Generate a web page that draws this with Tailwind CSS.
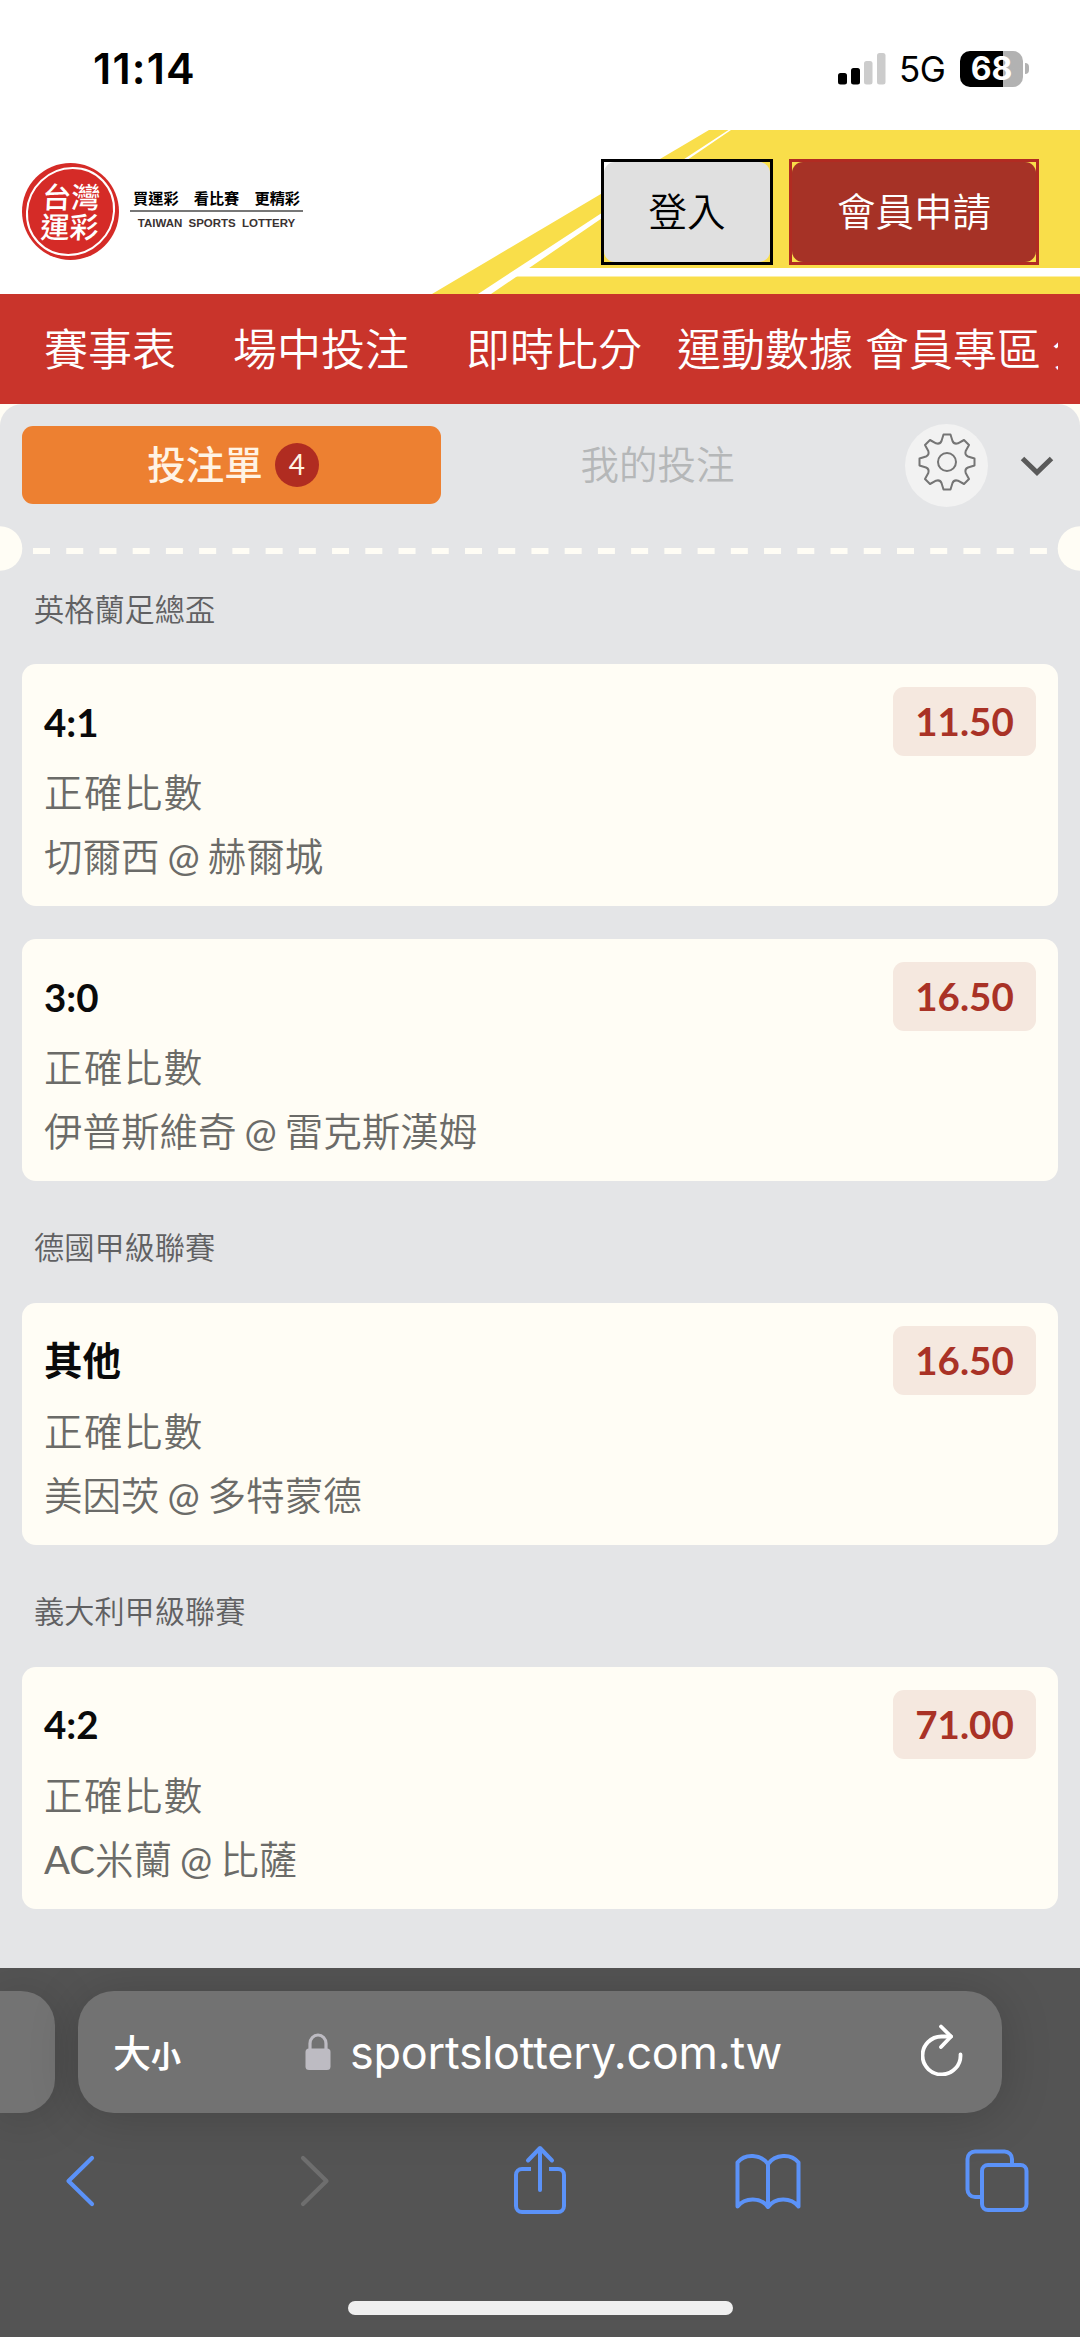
<!DOCTYPE html>
<html lang="zh-Hant">
<head>
    <meta charset="UTF-8">
    <meta name="viewport" content="width=device-width, initial-scale=1.0">
    <title>台灣運彩</title>
    <script src="https://cdn.jsdelivr.net/npm/@tailwindcss/browser@4"></script>
</head>
<body class="w-[1080px] h-[2337px] overflow-hidden bg-[#fffdf5] flex flex-col font-['Lato','Noto_Sans_CJK_TC',sans-serif]">

    <!-- Status bar -->
    <div class="h-[130px] shrink-0 bg-white flex items-start justify-between pl-[93px] pr-[51px] font-['Inter',sans-serif] text-black">
        <div class="mt-[43px] text-[43px] leading-[50px] font-semibold tracking-[1.2px]">11:14</div>
        <div class="mt-[51px] flex items-center h-[35px]">
            <svg class="w-[48px] h-[33px]" viewBox="0 0 48 33">
                <rect x="0" y="21" width="9" height="11.500" rx="2.500" fill="#000"/>
                <rect x="13" y="16" width="9" height="16.500" rx="2.500" fill="#000"/>
                <rect x="26" y="9" width="8.500" height="23.500" rx="2.500" fill="#ccc"/>
                <rect x="39" y="1" width="8.500" height="31.500" rx="2.500" fill="#ccc"/>
            </svg>
            <span class="ml-[13px] mt-[1px] w-[45px] text-[35px] leading-[35px] tracking-[-0.5px]">5G</span>
            <div class="ml-[16px] w-[63px] h-[36px] rounded-[10px] bg-linear-to-r from-black from-68% to-[#b2b2b2] to-68% text-white text-[32px] leading-[36px] font-bold text-center">68</div>
            <div class="ml-[2px] w-[4px] h-[11px] rounded-r-full bg-[#b2b2b2]"></div>
        </div>
    </div>

    <!-- Header -->
    <header class="relative h-[164px] shrink-0 bg-white flex items-start pl-[22px] pr-[41px]">
        <svg class="absolute inset-0 w-[1080px] h-[164px]" viewBox="0 0 1080 164">
            <path d="M709 0H1080V164H432Z" fill="#f9de4a"/>
            <path d="M728.500 0H731L491 164H478Z" fill="#fff"/>
            <path d="M528 138H1080V146.500H515Z" fill="#fff"/>
        </svg>
        <div class="relative mt-[33px] w-[97px] h-[97px] rounded-full bg-[#d52b27] p-[4px]">
            <div class="w-full h-full rounded-full border-2 border-white flex flex-col items-center justify-center text-white text-[29px] leading-[30px] font-medium -skew-x-3">
                <span>台灣</span>
                <span>運彩</span>
            </div>
        </div>
        <div class="relative ml-[11px] mt-[58px] w-[173px] text-center">
            <div class="h-[24px] border-b-2 border-[#777] flex justify-between px-[3px] text-[15.200px] leading-[20px] font-bold text-black">
                <span>買運彩</span><span>看比賽</span><span>更精彩</span>
            </div>
            <div class="mt-[4px] text-[11.500px] leading-[14px] font-bold text-[#3a3232] font-['Liberation_Sans',sans-serif] [word-spacing:3px] whitespace-nowrap">TAIWAN SPORTS LOTTERY</div>
        </div>
        <div class="relative ml-auto mt-[29px] flex gap-[16px] text-[38.500px]">
            <button class="w-[172px] h-[106px] border-[3px] border-black">
                <span class="flex items-center justify-center w-full h-full rounded-[11px] bg-[#e0e0e0] font-[350] text-black">登入</span>
            </button>
            <button class="w-[250px] h-[106px] border-[3px] border-[#b12b22]">
                <span class="flex items-center justify-center w-full h-full rounded-[11px] bg-[#a63226] font-[350] text-white">會員申請</span>
            </button>
        </div>
    </header>

    <!-- Main navigation, scrolls sideways -->
    <nav class="h-[110px] shrink-0 bg-[#c9342b] px-[22px]">
        <div class="h-full overflow-hidden flex items-center pl-[22px] text-[44px] font-[350] text-white whitespace-nowrap">
            <span class="mr-[57px]">賽事表</span>
            <span class="mr-[57px]">場中投注</span>
            <span class="mr-[35px]">即時比分</span>
            <span class="mr-[12px]">運動數據</span>
            <span class="mr-[11px]">會員專區</span>
            <span>分析</span>
        </div>
    </nav>

    <!-- Bet slip -->
    <main class="flex-1 bg-[#e4e5e7] rounded-t-[22px] overflow-hidden">
        <div class="flex items-center h-[122px] pl-[22px] pr-[26px]">
            <div class="w-[419px] h-[78px] rounded-[11px] bg-[#ed8031] flex items-center justify-center gap-[12px] pl-[3px]">
                <span class="text-[38.500px] font-medium text-[#fff3e4]">投注單</span>
                <span class="w-[44px] h-[44px] rounded-full bg-[#b02c21] text-[#fff3e4] text-[28px] leading-[43px] text-center">4</span>
            </div>
            <div class="w-[433px] text-center text-[38.500px] font-[350] text-[#b5b7b8]">我的投注</div>
            <div class="ml-[31px] w-[83px] h-[83px] rounded-full bg-[#f2f2f2] flex justify-center pt-[8px]">
                <svg class="w-[60px] h-[60px]" viewBox="-30 -30 60 60" fill="none" stroke="#757575" stroke-width="2" stroke-linejoin="round">
                    <path d="M-3.500-27.500H3.500L5.500-21Q7-17.500 11-18.700L17-22 22-17 18.700-11Q17.500-7 21-5.500L27.500-3.500V3.500L21 5.500Q17.500 7 18.700 11L22 17 17 22 11 18.700Q7 17.500 5.500 21L3.500 27.500H-3.500L-5.500 21Q-7 17.500-11 18.700L-17 22-22 17-18.700 11Q-17.500 7-21 5.500L-27.500 3.500V-3.500L-21-5.500Q-17.500-7-18.700-11L-22-17-17-22-11-18.700Q-7-17.500-5.500-21Z"/>
                    <circle cx="0" cy="0" r="9"/>
                </svg>
            </div>
            <svg class="ml-auto mt-[2px] w-[34px] h-[22px]" viewBox="0 0 34 22" fill="none" stroke="#5a5a5a" stroke-width="5">
                <path d="M2.500 3.500L17 17.500 31.500 3.500"/>
            </svg>
        </div>

        <!-- Ticket tear line -->
        <svg class="block w-[1080px] h-[45px]" viewBox="0 0 1080 45">
            <circle cx="0" cy="22.500" r="22.300" fill="#fffdf5"/>
            <circle cx="1080" cy="22.500" r="22.300" fill="#fffdf5"/>
            <path d="M33 25H1047" stroke="#fffdf5" stroke-width="6" stroke-dasharray="17 16.230"/>
        </svg>

        <section>
            <h2 class="h-[93px] pl-[34px] text-[30.200px] leading-[76px] font-[350] text-[#606062]">英格蘭足總盃</h2>
            <div class="mx-[22px] mb-[33px] h-[242px] rounded-[14px] bg-[#fffdf5] pl-[22px] pr-[22px] pt-[23px] text-[38.500px]">
                <div class="flex justify-between h-[69px]">
                    <span class="leading-[70px] font-bold text-[#0a0a0a]">4:1</span>
                    <span class="w-[143px] rounded-[11px] bg-[#f5e8df] leading-[69px] text-center font-bold text-[#a93226]">11.50</span>
                </div>
                <p class="mt-[4px] leading-[64px] tracking-[1.4px] font-[350] text-[#6b6b68]">正確比數</p>
                <p class="leading-[64px] font-[350] text-[#6b6b68]">切爾西<span class="font-normal mx-[8px]">@</span>赫爾城</p>
            </div>
            <div class="mx-[22px] h-[242px] rounded-[14px] bg-[#fffdf5] pl-[22px] pr-[22px] pt-[23px] text-[38.500px]">
                <div class="flex justify-between h-[69px]">
                    <span class="leading-[70px] font-bold text-[#0a0a0a]">3:0</span>
                    <span class="w-[143px] rounded-[11px] bg-[#f5e8df] leading-[69px] text-center font-bold text-[#a93226]">16.50</span>
                </div>
                <p class="mt-[4px] leading-[64px] tracking-[1.4px] font-[350] text-[#6b6b68]">正確比數</p>
                <p class="leading-[64px] font-[350] text-[#6b6b68]">伊普斯維奇<span class="font-normal mx-[8px]">@</span>雷克斯漢姆</p>
            </div>
        </section>

        <section>
            <h2 class="h-[122px] pt-[28px] pl-[34px] text-[30.200px] leading-[76px] font-[350] text-[#606062]">德國甲級聯賽</h2>
            <div class="mx-[22px] h-[242px] rounded-[14px] bg-[#fffdf5] pl-[22px] pr-[22px] pt-[23px] text-[38.500px]">
                <div class="flex justify-between h-[69px]">
                    <span class="leading-[68px] font-bold text-[#0a0a0a]">其他</span>
                    <span class="w-[143px] rounded-[11px] bg-[#f5e8df] leading-[69px] text-center font-bold text-[#a93226]">16.50</span>
                </div>
                <p class="mt-[4px] leading-[64px] tracking-[1.4px] font-[350] text-[#6b6b68]">正確比數</p>
                <p class="leading-[64px] font-[350] text-[#6b6b68]">美因茨<span class="font-normal mx-[8px]">@</span>多特蒙德</p>
            </div>
        </section>

        <section>
            <h2 class="h-[122px] pt-[28px] pl-[34px] text-[30.200px] leading-[76px] font-[350] text-[#606062]">義大利甲級聯賽</h2>
            <div class="mx-[22px] h-[242px] rounded-[14px] bg-[#fffdf5] pl-[22px] pr-[22px] pt-[23px] text-[38.500px]">
                <div class="flex justify-between h-[69px]">
                    <span class="leading-[69px] font-bold text-[#0a0a0a]">4:2</span>
                    <span class="w-[143px] rounded-[11px] bg-[#f5e8df] leading-[69px] text-center font-bold text-[#a93226]">71.00</span>
                </div>
                <p class="mt-[4px] leading-[64px] tracking-[1.4px] font-[350] text-[#6b6b68]">正確比數</p>
                <p class="leading-[64px] font-[350] text-[#6b6b68]"><span class="font-normal">AC</span>米蘭<span class="font-normal mx-[8px]">@</span>比薩</p>
            </div>
        </section>
    </main>

    <!-- Browser toolbar -->
    <footer class="h-[369px] shrink-0 bg-[#545454] overflow-hidden flex flex-col items-center pt-[23px]">
        <div class="flex w-full h-[122px]">
            <div class="w-[55px] rounded-r-[34px] bg-[#737373] shadow-[0_4px_50px_rgba(0,0,0,0.18)]"></div>
            <div class="ml-[23px] w-[924px] rounded-[36px] bg-[#727272] shadow-[0_4px_50px_rgba(0,0,0,0.18)] flex items-center text-white">
                <div class="ml-[35px] -mt-[3px] w-[70px] flex items-baseline font-['Noto_Sans_CJK_TC',sans-serif] whitespace-nowrap">
                    <span class="text-[38px] font-medium">大</span><span class="text-[30px] font-bold">小</span>
                </div>
                <svg class="ml-[122px] w-[26px] h-[38px]" viewBox="0 0 26 38">
                    <rect x="0.500" y="15.500" width="25" height="21.500" rx="3.500" fill="#bdbbc2"/>
                    <path d="M5 17V10.500a8 8.500 0 0 1 16 0V17" fill="none" stroke="#bdbbc2" stroke-width="3.200"/>
                </svg>
                <span class="ml-[19px] mt-[2px] w-[432px] font-['Inter',sans-serif] text-[45px] tracking-[-0.25px] whitespace-nowrap">sportslottery.com.tw</span>
                <svg class="ml-[139px] -mt-[4px] w-[42px] h-[52px]" viewBox="0 0 42 52" fill="none" stroke="#fff" stroke-width="3.800" stroke-linecap="round" stroke-linejoin="round">
                    <path d="M39.500 30.500A19 19 0 1 1 20.500 12.500H30"/>
                    <path d="M20 2.500L30 12.500 20 23"/>
                </svg>
            </div>
        </div>

        <div class="mt-[32px] w-full h-[72px] pl-[65px] flex items-center text-[#5b92f8]">
            <svg class="w-[30px] h-[54px]" viewBox="0 0 30 54" fill="none" stroke="currentColor" stroke-width="4.200" stroke-linecap="round" stroke-linejoin="round">
                <path d="M27 4L3.500 27 27 50"/>
            </svg>
            <svg class="ml-[205px] w-[30px] h-[54px] text-[#6e6e6e]" viewBox="0 0 30 54" fill="none" stroke="currentColor" stroke-width="4.200" stroke-linecap="round" stroke-linejoin="round">
                <path d="M3 4L26.500 27 3 50"/>
            </svg>
            <svg class="ml-[183px] w-[54px] h-[72px]" viewBox="0 0 54 72" fill="none" stroke="currentColor" stroke-width="4" stroke-linejoin="round">
                <path d="M18 24H9a6 6 0 0 0-6 6V61a6 6 0 0 0 6 6H45a6 6 0 0 0 6-6V30a6 6 0 0 0-6-6H36"/>
                <path d="M27 45V4M15 15.500L27 3 39 15.500" stroke-linecap="round"/>
            </svg>
            <svg class="ml-[168px] w-[66px] h-[60px]" viewBox="0 0 66 60" fill="none" stroke="currentColor" stroke-width="4" stroke-linejoin="round">
                <path d="M33 13C26 3 10 2 2.500 11.500V55.500C10 46 26 46 33 56 40 46 56 46 63.500 55.500V11.500C56 2 40 3 33 13V56"/>
            </svg>
            <svg class="ml-[164px] w-[64px] h-[64px]" viewBox="0 0 64 64" fill="none" stroke="currentColor" stroke-width="4">
                <rect x="17" y="16" width="44.500" height="45" rx="6"/>
                <path d="M17 48H10a7.500 7.500 0 0 1-7.500-7.500V10A7.500 7.500 0 0 1 10 2.500H39.500A7.500 7.500 0 0 1 47 10V16"/>
            </svg>
        </div>

        <div class="mt-[84px] w-[385px] h-[14px] shrink-0 rounded-full bg-[#efefef]"></div>
    </footer>
</body>
</html>
